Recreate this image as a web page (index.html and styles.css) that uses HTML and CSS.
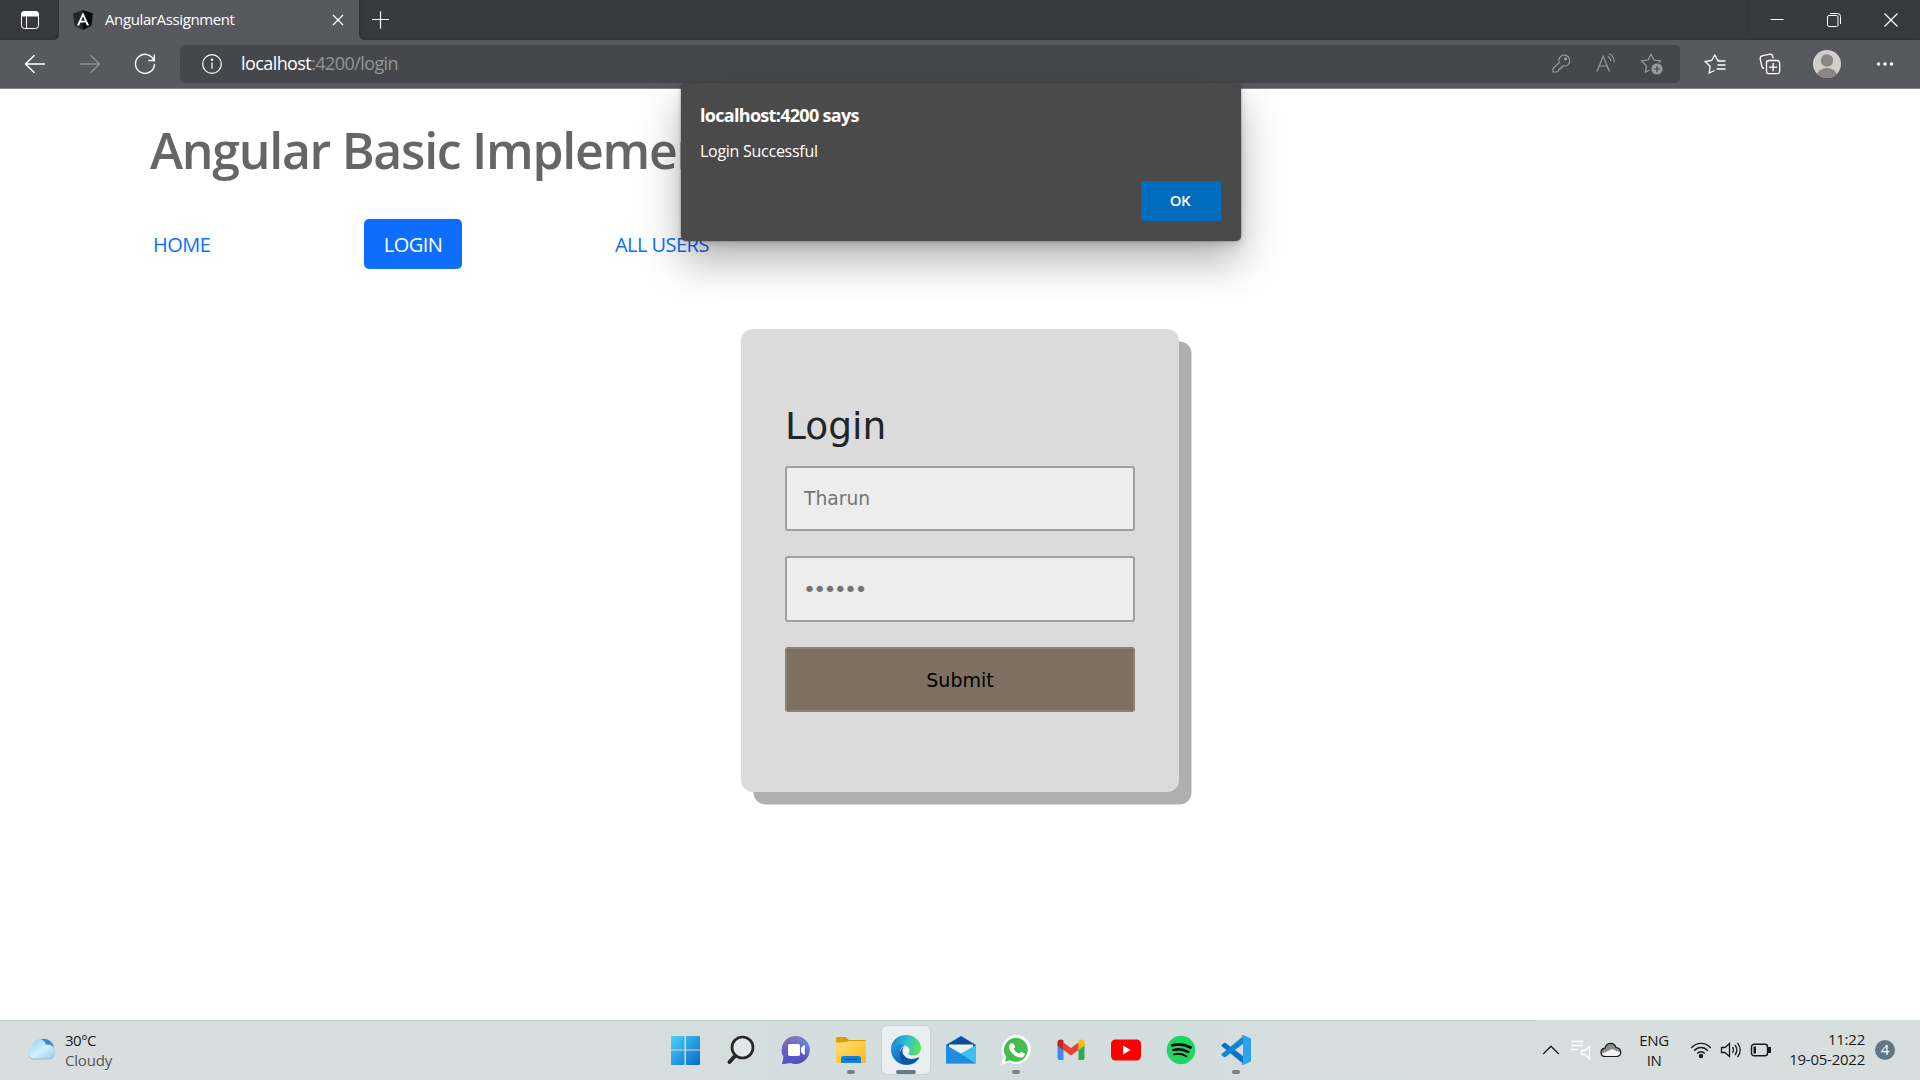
FILE: index.html
```html
<!DOCTYPE html>
<html lang="en">
<head>
<meta charset="utf-8">
<title>AngularAssignment</title>
<link rel="stylesheet" href="styles.css">
</head>
<body>
<header class="browser">
  <div class="tabstrip">
    <div class="tab-actions">
      <svg width="20" height="20" viewBox="0 0 20 20" fill="none" stroke="#fff"><rect x="1.5" y="1.5" width="17" height="17" rx="3"/><path d="M1.5 6V4.500a3 3 0 0 1 3-3h11a3 3 0 0 1 3 3V6z" fill="#fff"/><path d="M6.500 6v12"/></svg>
    </div>
    <div class="tab">
      <svg width="20" height="20" viewBox="0 0 20 20"><path d="M10 0 0 3.500l1.500 12.300L10 20z" fill="#23252f"/><path d="M10 0l10 3.500-1.500 12.300L10 20z" fill="#070910"/><path d="M10 2.200 3.900 15.500h2.300l1.200-3h5.200l1.200 3h2.300zM10 6.500l1.800 4.200H8.200z" fill="#fff"/></svg>
      <span class="tab-title">AngularAssignment</span>
      <svg width="12" height="12" viewBox="0 0 12 12" stroke="#fff" stroke-width="1.300"><path d="M1 1l10 10M11 1 1 11"/></svg>
    </div>
    <div class="new-tab"><svg width="18" height="18" viewBox="0 0 18 18" stroke="#fff" stroke-width="1.200"><path d="M8.500 .5v17M0 8.500h17"/></svg></div>
    <div class="window-controls">
      <span><svg width="14" height="14" viewBox="0 0 14 14" stroke="#fff"><path d="M.5 6.500h13"/></svg></span>
      <span><svg width="14" height="14" viewBox="0 0 14 14" stroke="#fff" fill="none"><rect x=".5" y="2.500" width="10.500" height="11" rx="1.500"/><path d="M3 .5h7.500a3 3 0 0 1 3 3V11"/></svg></span>
      <span><svg width="14" height="14" viewBox="0 0 14 14" stroke="#fff" stroke-width="1.200"><path d="M.5.5l13 13M13.500.5l-13 13"/></svg></span>
    </div>
  </div>
  <div class="toolbar">
    <span class="tool"><svg width="22" height="20" viewBox="0 0 22 20" fill="none" stroke="#fff" stroke-width="1.400"><path d="M21 10H1.500M10.500 1.200 1.500 10l9 8.800"/></svg></span>
    <span class="tool"><svg width="22" height="20" viewBox="0 0 22 20" fill="none" stroke="#8f9094" stroke-width="1.400"><path d="M1 10h19.500M11.500 1.200l9 8.800-9 8.800"/></svg></span>
    <span class="tool"><svg width="22" height="22" viewBox="0 0 22 22" fill="none" stroke="#fff" stroke-width="1.400"><path d="M20.200 8.500A9.500 9.500 0 1 0 20.500 11M20.300 1.500v6h-6"/></svg></span>
    <div class="address">
      <svg width="20" height="20" viewBox="0 0 20 20" fill="none" stroke="#fff" stroke-width="1.200"><circle cx="10" cy="10" r="9.300"/><path d="M10 8.500v6.300"/><circle cx="10" cy="5.800" r=".6" fill="#fff"/></svg>
      <div class="url">localhost<span>:4200/login</span></div>
      <div class="address-tools">
        <svg width="20" height="20" viewBox="0 0 20 20" fill="none" stroke="#999a9c" stroke-width="1.200"><path d="M8 9a5.500 5.500 0 1 1 4 4l-1.200.3V15H9v1.500H7.500V18L6 19H2v-3.500L8.200 9.800z"/><circle cx="14.500" cy="5.800" r="1" fill="#999a9c"/></svg>
        <svg width="22" height="20" viewBox="0 0 22 20" fill="none" stroke="#999a9c" stroke-width="1.200"><path d="M2 18.500 8.200 3l6.200 15.500M4.200 13h8M12.800 3.200c1.800 1 2.800 2.700 3 5M14.200.8c3.200 1.500 5 4.600 5.200 8.700"/></svg>
        <svg width="24" height="22" viewBox="0 0 24 22" fill="none" stroke="#999a9c" stroke-width="1.200"><path d="M9.500 17 5.500 19.200l.8-6.500L1.500 8l6.500-1L11 1.200 14 7l6.500 1-2 2"/><circle cx="17" cy="16" r="5" fill="#999a9c"/><path d="M17 13v6M14 16h6" stroke="#46474b"/></svg>
      </div>
    </div>
    <div class="browser-actions">
      <span class="tool"><svg width="22" height="22" viewBox="0 0 22 22" fill="none" stroke="#fff" stroke-width="1.300"><path d="M10.500 17.500 5.200 20l.9-6.800L1.200 8.500l6.500-1L10.800 2l3 5.500h1.500M13.500 8h8M13.500 12h8M12.500 16h9"/></svg></span>
      <span class="tool"><svg width="22" height="22" viewBox="0 0 22 22" fill="none" stroke="#fff" stroke-width="1.300"><rect x="7.500" y="7.500" width="13.200" height="13.200" rx="2.500"/><path d="M14.100 10v8.200M10 14.100h8.200M5 15.500c-1.300-.2-1.800-1-2.100-2L1.200 5.800C1 4 1.500 3.300 3 2.800l8-1.600c1.500-.2 2.500.6 2.800 2.200l.3 2"/></svg></span>
      <span class="tool tool-profile"><svg width="28" height="28" viewBox="0 0 28 28"><defs><clipPath id="face"><circle cx="14" cy="14" r="14"/></clipPath></defs><circle cx="14" cy="14" r="14" fill="#d1cfcb"/><g clip-path="url(#face)" fill="#8a8683"><circle cx="14" cy="10.500" r="6.200"/><ellipse cx="14" cy="26" rx="10" ry="8"/></g></svg></span>
      <span class="tool"><svg width="18" height="6" viewBox="0 0 18 6" fill="#fff"><circle cx="2.500" cy="3" r="1.700"/><circle cx="9" cy="3" r="1.700"/><circle cx="15.500" cy="3" r="1.700"/></svg></span>
    </div>
  </div>
</header>

<main class="page">
  <h1 class="page-title">Angular Basic Implementation</h1>
  <nav class="menu">
    <a class="menu-item home">HOME</a>
    <a class="menu-item active">LOGIN</a>
    <a class="menu-item users">ALL USERS</a>
  </nav>
  <form class="login-card">
    <h2 class="login-title">Login</h2>
    <div class="field">Tharun</div>
    <div class="field password">••••••</div>
    <button class="submit" type="button">Submit</button>
  </form>
</main>

<section class="dialog" role="alertdialog">
  <div class="dialog-title">localhost:4200 says</div>
  <div class="dialog-text">Login Successful</div>
  <button class="dialog-ok" type="button">OK</button>
</section>

<footer class="taskbar">
  <div class="weather">
    <svg width="30" height="24" viewBox="0 0 30 24"><defs><linearGradient id="cl" x1="0" y1="0" x2="1" y2="1"><stop offset="0" stop-color="#8fcdf5"/><stop offset=".55" stop-color="#d3f0ff"/><stop offset="1" stop-color="#8ecdf5"/></linearGradient></defs><path d="M12 4c4-4.500 14-1.500 15.500 5l-.5 5-6-3z" fill="#3c88ce"/><path d="M7 22.500a6 6 0 0 1-.5-11.500C7 1 19.500 0 21 8.500c4-1.500 8 1 7.500 6 .5 5-2 8-6 8z" fill="#8b9fa9" opacity=".6"/><path d="M7 21.500a6 6 0 0 1-.5-11.500C7 1 17.500-1 20 8c4-1 8.500 1 8 6 .5 5-2 7.500-5.500 7.500z" fill="url(#cl)"/></svg>
    <div class="weather-text"><span class="temp">30°C</span><span class="sky">Cloudy</span></div>
  </div>

  <div class="apps">
    <div class="app"><svg width="30" height="30" viewBox="0 0 30 30"><defs><linearGradient id="wn" x1="0" y1="0" x2="1" y2="1"><stop offset="0" stop-color="#4fd1fb"/><stop offset="1" stop-color="#0369c8"/></linearGradient></defs><path d="M1 1H13.500v13.500H0V2q0-1 1-1zM15 1h13q1 0 1 1v12.500H15zM0 15.500h13.500V30H1q-1 0-1-1zM15 15.500h14V29q0 1-1 1H15z" fill="url(#wn)"/></svg></div>
    <div class="app"><svg width="30" height="30" viewBox="0 0 30 30" fill="none" stroke="#292827" stroke-linecap="round"><circle cx="16.500" cy="12.500" r="10.500" stroke-width="2.700" fill="#e1e6e7"/><path d="M9 21 3.500 27" stroke-width="4"/></svg></div>
    <div class="app"><svg width="30" height="30" viewBox="0 0 30 30"><defs><linearGradient id="ch" x1="0" y1="0" x2=".3" y2="1"><stop offset="0" stop-color="#9a68ac"/><stop offset=".45" stop-color="#6b63c0"/><stop offset="1" stop-color="#514fc5"/></linearGradient><linearGradient id="ch2" x1=".2" y1=".8" x2="1" y2="0"><stop offset=".4" stop-color="#7191e8" stop-opacity="0"/><stop offset="1" stop-color="#7191e8"/></linearGradient></defs><path d="M15 1a14 14 0 1 1-5.500 27L1 29.200 2.500 22A14 14 0 0 1 15 1z" fill="url(#ch)"/><path d="M15 1a14 14 0 1 1-5.500 27L1 29.200 2.500 22A14 14 0 0 1 15 1z" fill="url(#ch2)"/><rect x="7" y="9" width="12" height="12" rx="1.800" fill="#fff"/><path d="M20 13l2.800-2.700q1-.8 1 .5v8.400q0 1.300-1 .5L20 17z" fill="#fff"/></svg></div>
    <div class="app running"><svg width="30" height="30" viewBox="0 0 30 30"><defs><linearGradient id="fo" x1="0" y1="0" x2="1" y2="1"><stop offset="0" stop-color="#ffdf7a"/><stop offset="1" stop-color="#fdb91b"/></linearGradient></defs><path d="M0 3.500Q0 2 1.500 2h8.200L13 5h16q1 0 1 1v4H0z" fill="#dd9d08"/><path d="M0 7.500Q10 7.500 12.500 6H30v22H0z" fill="url(#fo)"/><path d="M5 28v-4.500Q5 21 7.500 21h15q2.500 0 2.500 2.500V28z" fill="#1281d5"/><path d="M9 24.500h12" stroke="#074a87" stroke-linecap="round"/></svg></div>
    <div class="app active-app"><svg width="30" height="30" viewBox="0 0 30 30"><defs><linearGradient id="e1" x1="0" y1=".4" x2="1" y2=".6"><stop offset="0" stop-color="#1689d0"/><stop offset=".5" stop-color="#2bc2d6"/><stop offset="1" stop-color="#63e44b"/></linearGradient><linearGradient id="e2" x1="0" y1="0" x2=".6" y2="1"><stop offset="0" stop-color="#1da1e8"/><stop offset="1" stop-color="#0a62b8"/></linearGradient></defs><path d="M0 14C0 6 7 0 15 0c9 0 15 6.500 15 13 0 5-3.500 7.500-7.500 7.500-3.500 0-5.500-1.200-5-2.500 2-2 1-6-3-7.500C9 8.500 2 9 0 14z" fill="url(#e1)"/><path d="M0 14c1.500-5 9-6.500 14-3.500-4 1-5.500 4.500-5 9 .5 5 4.500 9 9 10A15 15 0 0 1 0 15z" fill="url(#e2)"/><path d="M14 11c-3.500 2-3 7-1 9.500 3.500 4.300 9.500 4.200 14.500 1.800.8-.3 1 .2.500.9C25 28 19 31 14 29c-7-4-7-15 0-18z" fill="#0c55a4"/><path d="M14 12c-4 3-2 8 2.500 9.500-1-1.500-.5-2.500.8-3.200C19 16 17.500 13 14 12z" fill="#e9f0f1"/></svg></div>
    <div class="app"><svg width="30" height="30" viewBox="0 0 30 30"><path d="M0 10 15 1l15 9v4H0z" fill="#0a4f9e"/><path d="M3 9.500h24v9H3z" fill="#edf0f0"/><path d="M0 10l15 8.500L30 10v17.500q0 1-1 1H0z" fill="#39c3f3"/><path d="M0 10l30 18.500H1q-1 0-1-1z" fill="#1e8dde"/></svg></div>
    <div class="app running"><svg width="30" height="30" viewBox="0 0 30 30"><path d="M15.500 0a14.500 14.500 0 1 1-7 27.300L0 30l2.500-8A14.800 14.800 0 0 1 15.500 0z" fill="#fff"/><path d="M15.500 2.700a12 12 0 1 1-6.500 22.500l-5 1.500L5.300 22A12.200 12.200 0 0 1 15.500 2.700z" fill="#43bd50"/><path d="M10.800 8.300l1.300.1q.5 0 .8.700l1 2.500q.2.500-.2 1l-1 1.200c1.500 2.700 3.300 4 5.600 5l1.400-1.700q.4-.4.900-.2l2.800 1.400q.5.200.4.900c-.2 2.400-2.500 3.700-4.500 3.400-6.500-1-11-6.500-11.300-10.500 0-1.800 1-3.800 2.800-3.800z" fill="#fff"/></svg></div>
    <div class="app"><svg width="28" height="22" viewBox="0 0 28 22"><path d="M.5 5H6.500v16h-4q-2 0-2-2z" fill="#4285f4"/><path d="M21.500 5h6v14q0 2-2 2h-4z" fill="#34a853"/><path d="M6.500 3.500 14 9l7.500-5.500V11L14 16.500 6.500 11z" fill="#ea4335"/><path d="M.5 3.500C.5.500 4-.5 6.500 1.500V11l-6-4.300z" fill="#c5221f"/><path d="M27.500 3.500c0-3-3.500-4-6-2V11l6-4.300z" fill="#fbbc04"/></svg></div>
    <div class="app"><svg width="30" height="22" viewBox="0 0 30 22"><rect x="0" y=".5" width="30" height="21" rx="4.500" fill="#f00"/><path d="M12 6.500 19.700 11 12 15.500z" fill="#fff"/></svg></div>
    <div class="app"><svg width="30" height="30" viewBox="0 0 30 30" fill="none" stroke="#000" stroke-linecap="round"><circle cx="15" cy="15" r="14.300" fill="#1ed760" stroke="none"/><path d="M6.500 10.300q9-2.500 18 2.200" stroke-width="2.700"/><path d="M7.300 15q7.700-2.200 15.200 2" stroke-width="2.300"/><path d="M8 19.300q6.500-1.600 12.500 1.900" stroke-width="1.900"/></svg></div>
    <div class="app running"><svg width="30" height="30" viewBox="0 0 30 30"><path d="M1 9.500 3 8q.8-.5 1.600 0L22.500 21.500V29L.9 11.200q-.9-.9.100-1.700z" fill="#0b72bf"/><path d="M1 20.500 3 22q.8.500 1.600 0L22.500 8.500V1L.9 18.800q-.9.900.1 1.700z" fill="#1187d3"/><path d="M22 0l7 3q1 .5 1 1.500v21q0 1-1 1.500l-7 3q-1 0-1.500-1l1.500-1.500v-25L20.500 1q.5-1 1.500-1z" fill="#2ba3ef"/></svg></div>
  </div>

  <div class="tray">
    <svg class="chevron" width="18" height="12" viewBox="0 0 18 12" fill="none" stroke="#1b1b1b" stroke-width="1.300"><path d="M1.200 10 9 2.200 16.800 10"/></svg>
    <svg class="media" width="22" height="22" viewBox="0 0 22 22" fill="none" stroke="#fff" stroke-width="1.300"><path d="M1 2.500h12M1 6.500h12M1 10.500h7M11.500 11.500H15l4.500-4.500v13L15 15.500h-3.500z"/></svg>
    <svg class="onedrive" width="22" height="16" viewBox="0 0 22 16"><path d="M5.500 14.500C-.5 14.500-.3 7 5 6.200 6.500 0 14 0 16 5.500c6 .5 6.500 9 .5 9z" fill="#f1f3f3"/><path d="M5 6.200C6.500 0 14 0 16 5.500c3 0 5 2.500 4.500 5L12 7 1.500 12C.5 9 2.500 6.500 5 6.200z" fill="#8b8c8d"/><path d="M5.500 14.500C-.5 14.500-.3 7 5 6.200 6.500 0 14 0 16 5.500c6 .5 6.500 9 .5 9z" fill="none" stroke="#171717" stroke-width="1.200"/></svg>
    <div class="lang"><span>ENG</span><span>IN</span></div>
    <div class="system">
      <svg width="22" height="18" viewBox="0 0 22 18" fill="none" stroke="#1b1b1b" stroke-width="1.400"><path d="M1.300 7C6.500.8 15.500.8 20.700 7M4.200 9.700c3.800-4.300 9.800-4.300 13.600 0M7.200 12.500c2.200-2.400 5.400-2.400 7.600 0"/><circle cx="11" cy="15" r="1.500" fill="#1b1b1b"/></svg>
      <svg width="22" height="18" viewBox="0 0 22 18" fill="none" stroke="#1b1b1b" stroke-width="1.300"><path d="M1.500 6.500v5H5l4.500 4V2.500L5 6.500zM12.500 6.200q2 2.800 0 5.600M15 4q3.700 5 0 10M17.500 1.800q5.500 7.200 0 14.400"/></svg>
      <svg width="22" height="18" viewBox="0 0 22 18" fill="none" stroke="#1b1b1b" stroke-width="1.400"><rect x="1.500" y="3.200" width="16" height="11.600" rx="2.500"/><rect x="4" y="6" width="1.500" height="6" fill="#1b1b1b" stroke-width="1"/><path d="M18.500 6.800h1.800v4.400h-1.800z" fill="#1b1b1b"/></svg>
    </div>
    <div class="clock"><span class="time">11:22</span><span class="date">19-05-2022</span></div>
    <span class="count">4</span>
  </div>
</footer>
</body>
</html>
```
FILE: styles.css
```css
* { box-sizing: border-box; }
body {
  margin: 0;
  width: 1920px;
  height: 1080px;
  overflow: hidden;
  display: flex;
  flex-direction: column;
  background: #fff;
  font-family: "Open Sans", "Noto Sans", sans-serif;
}
svg { display: block; flex: none; }
button { font-family: inherit; margin: 0; padding: 0; }

/* Browser frame */
.browser { height: 89px; flex: none; background: #58595e; border-bottom: 1px solid #828387; }
.tabstrip { height: 40px; display: flex; background: #58595e; }
.tab-actions {
  width: 59px;
  padding: 10px 0 0 20px;
  background: #38393c;
  border-bottom-right-radius: 6px;
  box-shadow: inset -1px -1px 2px #303134;
}
.tab { width: 300px; padding: 0 15px 0 14px; display: flex; align-items: center; background: #58595e; border-radius: 6px 6px 0 0; }
.tab-title { flex: 1; padding: 0 0 2px 12px; color: #fff; font-size: 15px; line-height: 38px; letter-spacing: -0.38px; }
.new-tab {
  flex: 1;
  padding: 11px 0 0 13px;
  background: #38393c;
  border-bottom-left-radius: 6px;
  box-shadow: inset 1px -1px 2px #303134;
}
.window-controls { width: 172px; display: flex; background: #38393c; box-shadow: inset 0 -1px 1px #303134; }
.window-controls span { width: 57.500px; display: flex; align-items: center; justify-content: center; }
.toolbar { height: 48px; padding: 0 8px 0 7px; display: flex; align-items: center; }
.tool { width: 55px; display: flex; align-items: center; justify-content: center; }
.tool-profile { width: 60px; }
.address {
  width: 1500px;
  height: 38px;
  margin-left: 8px;
  padding: 0 16px 0 22px;
  display: flex;
  align-items: center;
  background: #46474b;
  border-radius: 5px;
}
.url { flex: 1; padding: 0 0 2px 19px; color: #fff; font-size: 18px; line-height: 34px; letter-spacing: -0.6px; }
.url { letter-spacing: -0.58px; }
.url span { color: #949598; }
.address-tools { display: flex; gap: 23px; }
.address-tools svg:first-child { margin-right: 1px; }
.browser-actions { margin-left: 7px; display: flex; align-items: center; }

/* Page content */
.page { flex: 1; padding: 31px 150px 0; display: flex; flex-direction: column; }
.page-title {
  margin: 0;
  height: 60px;
  color: #666;
  font-size: 50px;
  font-weight: 600;
  line-height: 60px;
  letter-spacing: -1.270px;
  white-space: nowrap;
}
.menu { margin-top: 39px; height: 50px; display: flex; align-items: center; }
.menu-item { height: 50px; color: #0d6efd; font-size: 20px; line-height: 52px; letter-spacing: -0.54px; white-space: nowrap; }
.home { width: 214px; padding-left: 3px; }
.active { width: 98px; color: #fff; text-align: center; background: #0d6efd; border-radius: 5px; }
.users { margin-left: 153px; }
.login-card {
  width: 438px;
  height: 463px;
  margin: 60px 0 0 591px;
  padding: 73px 44px 0;
  background: #dbdbdb;
  border-radius: 12px;
  box-shadow: 12.500px 12.500px 0 #afafaf;
  font-family: "DejaVu Sans", sans-serif;
}
.login-title { margin: 0 0 16px; color: #212529; font-size: 37.500px; font-weight: 400; line-height: 48px; }
.field, .submit { width: 350px; height: 65px; border-radius: 3px; font-size: 18.700px; line-height: 61px; }
.field { margin-bottom: 25px; padding-left: 17px; color: #757575; background: #ededed; border: 2px solid #9f9f9f; }
.password { height: 66px; padding-left: 16px; font-size: 22px; line-height: 63px; letter-spacing: -2.700px; }
.submit { display: block; padding-top: 1px; font-family: inherit; font-size: 19px; color: #000; background: #7d7063; border: 2px solid #918071; }

/* JavaScript alert over the page */
.dialog {
  position: absolute;
  left: 681px;
  top: 84px;
  width: 560px;
  height: 157px;
  padding: 17px 20px 20px 19px;
  display: flex;
  flex-direction: column;
  color: #fff;
  background: #4a4a4a;
  border-radius: 5px;
  box-shadow: 0 0 2px rgba(0, 0, 0, .5), 0 20px 42px rgba(0, 0, 0, .3), 0 4px 10px rgba(0, 0, 0, .13);
}
.dialog-title { font-size: 18px; font-weight: 700; line-height: 28px; letter-spacing: -0.7px; }
.dialog-text { margin-top: 7px; font-size: 16px; line-height: 30px; letter-spacing: -0.27px; }
.dialog-ok {
  width: 80px;
  height: 40px;
  margin-top: 15px;
  padding: 0 2px 2px 0;
  flex: none;
  align-self: flex-end;
  color: #fff;
  background: #006cbe;
  border: 0;
  border-radius: 2px;
  font-size: 15px;
  font-weight: 600;
  letter-spacing: -0.5px;
}

/* Taskbar */
.taskbar {
  height: 60px;
  flex: none;
  display: grid;
  grid-template-columns: 662px 598px 1fr;
  background: linear-gradient(#c1caca, #c1caca) 0 0 / 1536px 1px no-repeat, linear-gradient(90deg, #d8dddd, #d4dddd 50%, #d7dede);
  color: #1b1b1b;
  font-size: 15px;
  line-height: 20px;
}
.weather { display: flex; padding: 17px 0 0 26px; }
.weather-text { display: flex; flex-direction: column; margin: -7px 0 0 9px; }
.temp { letter-spacing: -0.5px; }
.sky { color: #525858; letter-spacing: -0.2px; }
.apps { display: flex; gap: 7px; padding-top: 6px; }
.app { position: relative; width: 48px; height: 48px; display: flex; align-items: center; justify-content: center; border-radius: 5px; }
.app svg { margin-top: -1px; }
.active-app { background: #e9eeee; box-shadow: 0 0 1px 1px #c9d1d1; }
.running::after, .active-app::after {
  content: "";
  position: absolute;
  left: 20px;
  bottom: 0;
  width: 8px;
  height: 4px;
  background: #7b8080;
  border-radius: 2px;
}
.active-app::after { left: 14px; width: 20px; background: #647b8a; }
.tray { display: flex; align-items: center; padding-right: 25px; justify-content: flex-end; }
.media { margin-left: 10px; }
.onedrive { margin-left: 8px; }
.lang { width: 36px; margin-left: 14px; display: flex; flex-direction: column; align-items: center; letter-spacing: -0.4px; padding-bottom: 1px; }
.system { display: flex; gap: 8px; margin-left: 18px; }
.clock { width: 93px; display: flex; flex-direction: column; align-items: flex-end; letter-spacing: -0.24px; padding-bottom: 3px; }
.count { width: 20px; height: 20px; margin-left: 10px; color: #fff; background: #5f7886; border-radius: 50%; text-align: center; font-size: 15px; line-height: 19px; }
```
